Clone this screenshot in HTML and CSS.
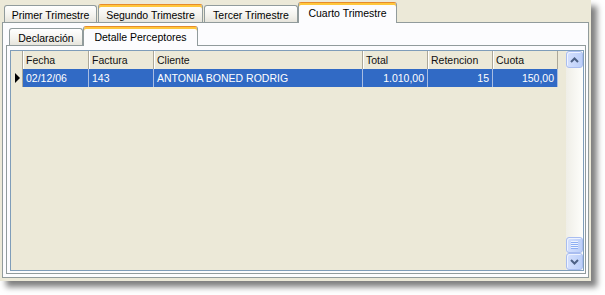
FILE: index.html
```html
<!DOCTYPE html>
<html lang="es">
<head>
<meta charset="utf-8">
<title>Trimestres</title>
<link rel="stylesheet" href="styles.css">
</head>
<body>
<div class="window">
  <div class="tabstrip outer-tabs">
    <div class="tab w-primer">Primer Trimestre</div>
    <div class="tab hot w-segundo">Segundo Trimestre</div>
    <div class="tab w-tercer">Tercer Trimestre</div>
    <div class="tab active w-cuarto">Cuarto Trimestre</div>
  </div>
  <div class="panel outer-panel">
    <div class="tabstrip inner-tabs">
      <div class="tab w-decl">Declaración</div>
      <div class="tab active w-detalle">Detalle Perceptores</div>
    </div>
    <div class="panel inner-panel">
      <div class="grid">
        <div class="grid-main">
          <div class="hrow">
            <div class="cell c-ind"></div>
            <div class="cell c-fecha">Fecha</div>
            <div class="cell c-factura">Factura</div>
            <div class="cell c-cliente">Cliente</div>
            <div class="cell c-num">Total</div>
            <div class="cell c-num">Retencion</div>
            <div class="cell c-num">Cuota</div>
          </div>
          <div class="drow">
            <div class="cell c-ind"><span class="pointer"></span></div>
            <div class="cell c-fecha">02/12/06</div>
            <div class="cell c-factura">143</div>
            <div class="cell c-cliente">ANTONIA BONED RODRIG</div>
            <div class="cell c-num right">1.010,00</div>
            <div class="cell c-num right">15</div>
            <div class="cell c-num right">150,00</div>
          </div>
        </div>
        <div class="vscroll">
          <div class="sbtn">
            <svg width="9" height="6" viewBox="0 0 9 6"><path d="M1 5 L4.5 1.5 L8 5" fill="none" stroke="#4d6185" stroke-width="2"/></svg>
          </div>
          <div class="strack"></div>
          <div class="sbtn thumb">
            <svg width="7" height="8" viewBox="0 0 7 8">
              <rect x="0" y="0" width="7" height="1" fill="#eef4fe"/>
              <rect x="0" y="1" width="7" height="1" fill="#8daef3"/>
              <rect x="0" y="2" width="7" height="1" fill="#eef4fe"/>
              <rect x="0" y="3" width="7" height="1" fill="#8daef3"/>
              <rect x="0" y="4" width="7" height="1" fill="#eef4fe"/>
              <rect x="0" y="5" width="7" height="1" fill="#8daef3"/>
              <rect x="0" y="6" width="7" height="1" fill="#eef4fe"/>
              <rect x="0" y="7" width="7" height="1" fill="#8daef3"/>
            </svg>
          </div>
          <div class="sbtn">
            <svg width="9" height="6" viewBox="0 0 9 6"><path d="M1 1 L4.5 4.5 L8 1" fill="none" stroke="#4d6185" stroke-width="2"/></svg>
          </div>
        </div>
      </div>
    </div>
  </div>
</div>
</body>
</html>
```
FILE: styles.css
```css
* { box-sizing: border-box; }
html, body { margin: 0; padding: 0; background: #ffffff; }
html, body { height: 295px; }
body {
  font-family: "Liberation Sans", Arial, sans-serif;
  font-size: 10.5px;
  color: #000;
}
.window {
  width: 591px;
  height: 281px;
  background: #ece9d8;
  padding: 0 2px 3px 2px;
  display: flex;
  flex-direction: column;
  box-shadow: 6px 6px 6px rgba(0, 0, 0, 0.5);
}
.tabstrip {
  display: flex;
  align-items: flex-end;
  position: relative;
  z-index: 1;
  flex: none;
}
.outer-tabs { height: 22px; padding-left: 2px; }
.inner-tabs { height: 22px; padding-left: 3px; }
.tab {
  height: 17px;
  border: 1px solid #919b9c;
  border-bottom: none;
  border-radius: 3px 3px 0 0;
  background: linear-gradient(#ffffff, #f3f2ed 60%, #e6e4dc);
  display: flex;
  align-items: center;
  justify-content: center;
  margin-right: 1px;
  white-space: nowrap;
  padding-top: 1px;
}
.tab.hot {
  height: 18px;
  border-top: 1px solid #e68b2c;
  box-shadow: inset 0 2px 0 #ffc73c;
  padding-top: 2px;
}
.tab.active {
  height: 21px;
  margin-bottom: -1px;
  margin-left: -1px;
  background: #fcfcfe;
  border-top: 1px solid #e68b2c;
  box-shadow: inset 0 2px 0 #ffc73c;
  align-items: flex-start;
  padding-top: 4px;
}
.inner-tabs .tab.active { height: 20px; padding-top: 4px; }
.w-primer { width: 93px; }
.w-segundo { width: 105px; }
.w-tercer { width: 94px; }
.w-cuarto { width: 99px; }
.w-decl { width: 74px; }
.w-detalle { width: 115px; }
.panel {
  border: 1px solid #919b9c;
  background: #fcfcfe;
  display: flex;
  flex-direction: column;
  flex: 1;
  min-height: 0;
}
.outer-panel { padding: 0 2px 3px 3px; }
.inner-panel { padding: 4px 1px 2px 3px; }
.grid {
  flex: 1;
  border: 1px solid #7f9db9;
  background: #ece9d8;
  display: flex;
  min-height: 0;
}
.grid-main { flex: 1; display: flex; flex-direction: column; }
.hrow, .drow { display: flex; height: 18px; }
.cell {
  display: flex;
  align-items: center;
  padding-left: 3px;
  border-right: 1px solid #aca899;
  box-shadow: inset 1px 0 0 #ffffff;
  white-space: nowrap;
  overflow: hidden;
}
.hrow .cell { color: #111; }
.hrow .c-ind { box-shadow: none; }
.c-ind { width: 12px; padding-left: 4px; }
.c-fecha { width: 66px; }
.c-factura { width: 65px; }
.c-cliente { width: 209px; }
.c-num { width: 65px; }
.drow .cell {
  background: #316ac5;
  color: #ffffff;
  border-right: 1px solid #a9bde2;
  box-shadow: none;
}
.drow .c-ind {
  background: #ece9d8;
  border-right: 1px solid #aca899;
}
.right { justify-content: flex-end; padding-right: 3px; padding-left: 0; }
.pointer {
  width: 0;
  height: 0;
  border-left: 5px solid #000;
  border-top: 5px solid transparent;
  border-bottom: 5px solid transparent;
}
.vscroll {
  width: 17px;
  display: flex;
  flex-direction: column;
  background: linear-gradient(to right, #efeee7, #fefefb);
}
.strack { flex: 1; }
.sbtn {
  height: 17px;
  border: 1px solid #a9bdf0;
  border-radius: 3px;
  background: linear-gradient(to right, #d4e0fd, #bccff9);
  box-shadow: inset 1px 1px 0 #eef3ff;
  display: flex;
  align-items: center;
  justify-content: center;
}
.thumb { height: 16px; }
```
